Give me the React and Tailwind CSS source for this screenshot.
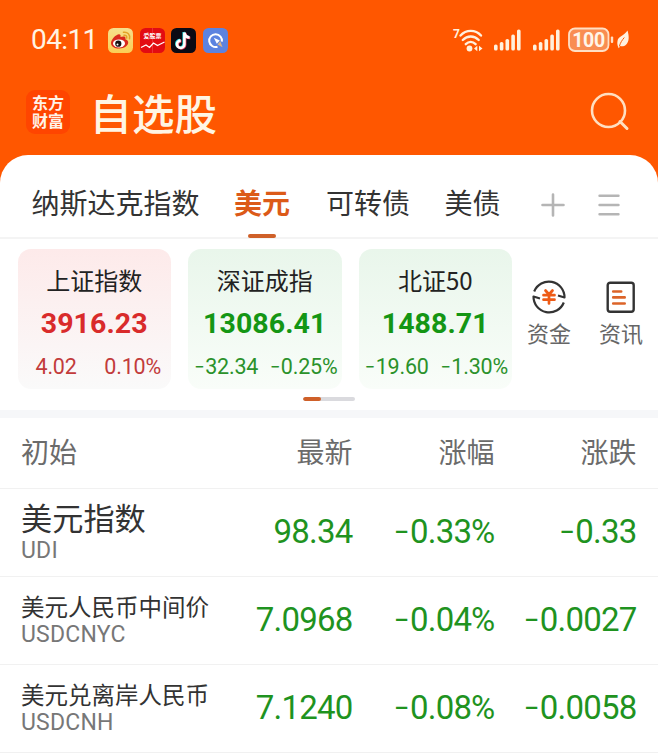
import React from "react";

const CJK = "font-['Noto_Sans_CJK_SC',sans-serif]";
const NUM = "font-['Roboto','Noto_Sans_CJK_SC',sans-serif]";

function Num({ value }) {
  if (!value.startsWith("-")) return value;
  return (
    <>
      <span className="mr-[0.02em] text-[1.12em] font-light leading-none font-['Inter',sans-serif]">-</span>
      {value.slice(1)}
    </>
  );
}

function Signal() {
  return (
    <svg width="28" height="22" viewBox="0 0 28 22" fill="#fff1de">
      <rect x="0" y="15.5" width="3.6" height="6" rx="1.6" />
      <rect x="5.8" y="13" width="3.6" height="8.5" rx="1.6" />
      <rect x="11.5" y="10" width="3.6" height="11.5" rx="1.6" />
      <rect x="17.3" y="5.5" width="3.6" height="16" rx="1.6" />
      <rect x="23" y="0.5" width="3.6" height="21" rx="1.6" />
    </svg>
  );
}

function StatusBar() {
  return (
    <div className="flex h-[80px] items-center pl-[31px]">
      <span className={`w-[77px] whitespace-nowrap text-[28px] leading-none tracking-[-0.6px] text-[#fff3e2] ${NUM}`}>04:11</span>
      <div className="flex gap-[6.500px]">
        <svg width="25" height="25" viewBox="0 0 25 25">
          <defs>
            <linearGradient id="wb" x1="0" y1="0" x2="0" y2="1">
              <stop offset="0" stopColor="#f6e08d" />
              <stop offset="1" stopColor="#fbcf55" />
            </linearGradient>
          </defs>
          <rect width="25" height="25" rx="5.5" fill="url(#wb)" />
          <path d="M3 15c0-3.600 5.500-9.200 8.300-8.800 1.500.200 1.500 1.800 1.100 2.900 2.200-1 4.900-1.100 5.100.800.100.700-.300 1.300-.3 1.300 2 .600 3 1.700 3 3.300 0 3.200-4.100 6-9 6S3 18.500 3 15z" fill="#d9291c" />
          <ellipse cx="11" cy="15.400" rx="6" ry="4" fill="#fff" />
          <circle cx="10.300" cy="15.700" r="3.100" fill="#171111" />
          <circle cx="9.500" cy="16.600" r="1" fill="#fff" />
          <path d="M15.500 4.300c4-.700 7 2.600 6 6.500M16 7.200c1.900-.300 3.100 1.100 2.700 2.900" fill="none" stroke="#e3a328" strokeWidth="1.500" strokeLinecap="round" />
        </svg>
        <svg width="25" height="25" viewBox="0 0 25 25">
          <rect width="25" height="25" rx="5.500" fill="#e30b12" />
          <path d="M12.500 0v25" stroke="#f0494d" strokeWidth=".6" />
          <text x="12.500" y="10.300" textAnchor="middle" fontSize="6" fontWeight="700" fill="#fff" fontFamily="Noto Sans CJK SC, sans-serif">爱股票</text>
          <path d="M1 19.500l5-2.500 3.500 2.500 4-4.500 4 2.500 3-1.500L24.500 14" fill="none" stroke="#fff" strokeWidth="1.300" />
        </svg>
        <svg width="25" height="25" viewBox="0 0 25 25">
          <rect width="25" height="25" rx="5.500" fill="#0b0a14" />
          <g fill="none" strokeWidth="2.600">
            <path d="M12.700 4v11.800a3.700 3.700 0 1 1-3.700-3.700M12.700 4c.3 3 2.200 4.800 5.200 5" stroke="#27d8dc" />
            <path d="M14.100 5v11.800a3.700 3.700 0 1 1-3.700-3.700M14.100 5c.3 3 2.200 4.800 5.200 5" stroke="#f33b5e" />
            <path d="M13.400 4.500v11.800a3.700 3.700 0 1 1-3.700-3.700M13.400 4.500c.3 3 2.200 4.800 5.200 5" stroke="#fff" />
          </g>
        </svg>
        <svg width="25" height="25" viewBox="0 0 25 25">
          <rect width="25" height="25" rx="5.500" fill="#5c83e0" />
          <path d="M14.500 18.700a6.400 6.400 0 1 1 4.400-5" fill="none" stroke="#fff" strokeWidth="2" />
          <path d="M10.800 9.800l6 2.700-3 3.200z" fill="#fff" />
          <path d="M14.500 16.500l2.800-3.300 2.200 6z" fill="#d9b48c" />
        </svg>
      </div>
      <div className="ml-[225px] flex items-center">
        <svg className="overflow-visible" width="31" height="26" viewBox="0 0 31 26">
          <text x="0" y="10.500" fontSize="12" fontWeight="700" fill="#fff1de" fontFamily="Roboto, sans-serif">7</text>
          <g fill="none" stroke="#fff1de" strokeWidth="2.400" strokeLinecap="round">
            <path d="M7.500 8.500c5.500-6.200 15-6.200 20.500 0" />
            <path d="M9.800 13c4.600-4.600 11.300-4.600 15.900 0" />
            <path d="M12.800 17.200c3-2.900 6.800-2.900 9.800 0" />
          </g>
          <circle cx="16.500" cy="21.500" r="2.900" fill="#fff1de" />
          <path d="M24.300 18.800v5.400l-3.300-2.700zM26 18.800v5.400l3.500-2.700z" fill="#fff1de" />
        </svg>
        <div className="ml-[10px]"><Signal /></div>
        <div className="ml-[11px]"><Signal /></div>
        <svg className="ml-[7px]" width="64" height="26" viewBox="0 0 64 26">
          <rect x="1" y="1.500" width="39.500" height="22.500" rx="6" fill="#f98d52" stroke="#ffdfc4" strokeWidth="1.800" />
          <text x="20.700" y="19.800" textAnchor="middle" fontSize="19.500" fontWeight="700" textLength="33" fill="#fff5e8" fontFamily="Roboto, sans-serif">100</text>
          <rect x="42.800" y="9.500" width="2.400" height="6.500" rx="1" fill="#ffdfc4" />
          <path d="M59.500 3.500c1.800 6 1.800 11-1.500 14.300-1.700 1.600-4 1.900-5.700 1.200l-1.500 2.200c-.8-1.300-2-4-1.300-7.200C50.200 9 56 9 59.500 3.500z" fill="#fff1de" />
          <path d="M51.300 19.500c1-4 3-6.500 5-9" stroke="#ff5700" strokeWidth="1" fill="none" />
        </svg>
      </div>
    </div>
  );
}

function TitleBar() {
  return (
    <div className="flex h-[75px] items-center pl-[26px] pb-[12px]">
      <div className={`flex h-[44px] w-[44px] items-center justify-center rounded-[9px] bg-[#ff4500] text-[16px] font-bold leading-[18px] text-[#fff3e8] ${CJK}`}>
        <p className="w-[32px] pb-[2px]">东方财富</p>
      </div>
      <h1 className={`ml-[19.500px] text-[42.500px] font-medium leading-[60px] text-[#fff5e4] ${CJK}`}>自选股</h1>
      <svg className="ml-auto mr-[27px] mt-px" width="42" height="42" viewBox="0 0 42 42" fill="none" stroke="#ffdfc0" strokeWidth="2.600">
        <circle cx="19.500" cy="19.500" r="16.500" />
        <path d="M31 30.500l7 7" strokeLinecap="round" strokeWidth="3" />
      </svg>
    </div>
  );
}

function Tabs() {
  return (
    <div className={`flex h-[84px] border-b-2 border-[#f4f4f4] pl-[31.500px] pt-[27px] text-[28px] leading-[40px] text-[#333] ${CJK}`}>
      <span className="w-[202.500px] whitespace-nowrap">纳斯达克指数</span>
      <div className="flex w-[92px] flex-col">
        <span className="font-bold text-[#dc5a18]">美元</span>
        <span className="ml-[14px] mt-[12px] h-[4px] w-[28px] shrink-0 rounded-full bg-[#cf6029]" />
      </div>
      <span className="w-[118.500px]">可转债</span>
      <span className="w-[96.500px]">美债</span>
      <svg className="mt-[11px]" width="24" height="24" viewBox="0 0 24 24" stroke="#b5b5b5" strokeWidth="2.600" strokeLinecap="round">
        <path d="M12 1.500v21M1.500 12h21" />
      </svg>
      <svg className="ml-[32px] mt-[11px]" width="24" height="24" viewBox="0 0 24 24" stroke="#b5b5b5" strokeWidth="2.400" strokeLinecap="round">
        <path d="M2.500 2.800h19M2.500 12h19M2.500 21.200h19" />
      </svg>
    </div>
  );
}

const INDICES = [
  { name: "上证指数", price: "3916.23", diff: "4.02", pct: "0.10%", up: true },
  { name: "深证成指", price: "13086.41", diff: "-32.34", pct: "-0.25%", up: false },
  { name: "北证50", price: "1488.71", diff: "-19.60", pct: "-1.30%", up: false },
];

function IndexCard({ item }) {
  const tone = item.up
    ? "from-[#fdeaea] to-[#fafafa] text-[#c23b3b]"
    : "from-[#e9f6eb] to-[#f9fdf9] text-[#2b922b]";
  return (
    <div className={`flex h-[140px] w-[153.500px] flex-col items-center rounded-[13px] bg-linear-to-b pt-[13px] ${tone}`}>
      <span className={`text-[24px] leading-[36px] text-[#222] ${CJK}`}>{item.name}</span>
      <span className={`mt-[8px] text-[28.500px] font-bold leading-[36px] tracking-[0.1px] ${item.up ? "text-[#d92b2b]" : "text-[#149614]"} ${NUM}`}>{item.price}</span>
      <div className={`mt-[10px] flex w-full justify-between whitespace-nowrap text-[21.500px] leading-[30px] ${item.up ? "pl-[18px] pr-[10px] tracking-[-0.2px]" : "pl-[6px] pr-[4px] tracking-[-0.2px]"} ${NUM}`}>
        <span><Num value={item.diff} /></span>
        <span><Num value={item.pct} /></span>
      </div>
    </div>
  );
}

function IndexStrip() {
  return (
    <div className="flex h-[149px] items-start pl-[17.500px] pt-[10px]">
      <div className="flex shrink-0 gap-[17px]">
        {INDICES.map((i) => <IndexCard key={i.name} item={i} />)}
      </div>
      <div className={`flex shrink-0 gap-[28px] pl-[15px] pt-[30px] text-[22px] leading-[32px] text-[#666] ${CJK}`}>
        <div className="flex w-[44px] flex-col items-center">
          <svg width="36" height="36" viewBox="0 0 36 36" fill="none" stroke="#333" strokeWidth="2.200">
            <path d="M3.200 12.500A15.700 15.700 0 0 1 33.500 18.500L27 16.500" strokeLinejoin="round" />
            <path d="M32.800 23.500A15.700 15.700 0 0 1 2.500 17.500L9 19.500" strokeLinejoin="round" />
            <path d="M14.500 11.500l3.500 4 3.500-4M12.500 16.200h11M12.500 20.700h11M18 16v8.500" stroke="#ee5b16" strokeWidth="2.700" strokeLinecap="round" />
          </svg>
          <span className="mt-px">资金</span>
        </div>
        <div className="flex w-[44px] flex-col items-center">
          <svg width="36" height="36" viewBox="0 0 36 36" fill="none" stroke="#333" strokeWidth="2.400">
            <rect x="4.700" y="3.700" width="26" height="29" rx="2.500" />
            <path d="M10.200 12.500h8M10.200 18.400h11.500M10.200 24.500h11.500" stroke="#dc6429" strokeWidth="2.600" strokeLinecap="round" />
          </svg>
          <span className="mt-px">资讯</span>
        </div>
      </div>
    </div>
  );
}

const ROWS = [
  { name: "美元指数", code: "UDI", last: "98.34", pct: "-0.33%", diff: "-0.33", big: true },
  { name: "美元人民币中间价", code: "USDCNYC", last: "7.0968", pct: "-0.04%", diff: "-0.0027" },
  { name: "美元兑离岸人民币", code: "USDCNH", last: "7.1240", pct: "-0.08%", diff: "-0.0058" },
];

function QuoteTable() {
  return (
    <div>
      <div className={`grid h-[71px] grid-cols-[211px_120.500px_142px_142px] border-b border-[#f1f1f1] pl-[21px] pt-[13px] text-[28px] leading-[40px] text-[#6b6b6b] ${CJK}`}>
        <span>初始</span>
        <span className="text-right">最新</span>
        <span className="text-right">涨幅</span>
        <span className="text-right">涨跌</span>
      </div>
      {ROWS.map((r) => (
        <div key={r.code} className="grid h-[88px] grid-cols-[211px_120.500px_142px_142px] border-b border-[#f1f1f1] pl-[21px]">
          <div className={`flex flex-col whitespace-nowrap ${r.big ? "pt-[10px]" : "pt-[11px]"}`}>
            <span className={`text-[#333] ${CJK} ${r.big ? "text-[31.200px] leading-[36px]" : "text-[23.500px] leading-[36px]"}`}>{r.name}</span>
            <span className={`text-[23px] leading-[28px] tracking-[0.2px] text-[#777] font-['Roboto',sans-serif] ${r.big ? "mt-[2px]" : "mt-[-3px]"}`}>{r.code}</span>
          </div>
          {[r.last, r.pct, r.diff].map((v, i) => (
            <span key={i} className={`whitespace-nowrap text-right text-[33px] leading-[86px] tracking-[-0.800px] text-[#1f931f] ${NUM}`}><Num value={v} /></span>
          ))}
        </div>
      ))}
    </div>
  );
}

export default function App() {
  return (
    <div className="h-[755px] w-[658px] overflow-hidden bg-[#ff5700]">
      <StatusBar />
      <TitleBar />
      <main className="h-[600px] rounded-t-[28px] bg-white">
        <Tabs />
        <IndexStrip />
        <div className="flex h-[22px] justify-center pt-[9px]">
          <div className="h-[4px] w-[52px] overflow-hidden rounded-full bg-[#dadade]">
            <div className="h-full w-[18px] rounded-full bg-[#cf6029]" />
          </div>
        </div>
        <div className="h-[8px] bg-[#f6f7f9]" />
        <QuoteTable />
      </main>
    </div>
  );
}
